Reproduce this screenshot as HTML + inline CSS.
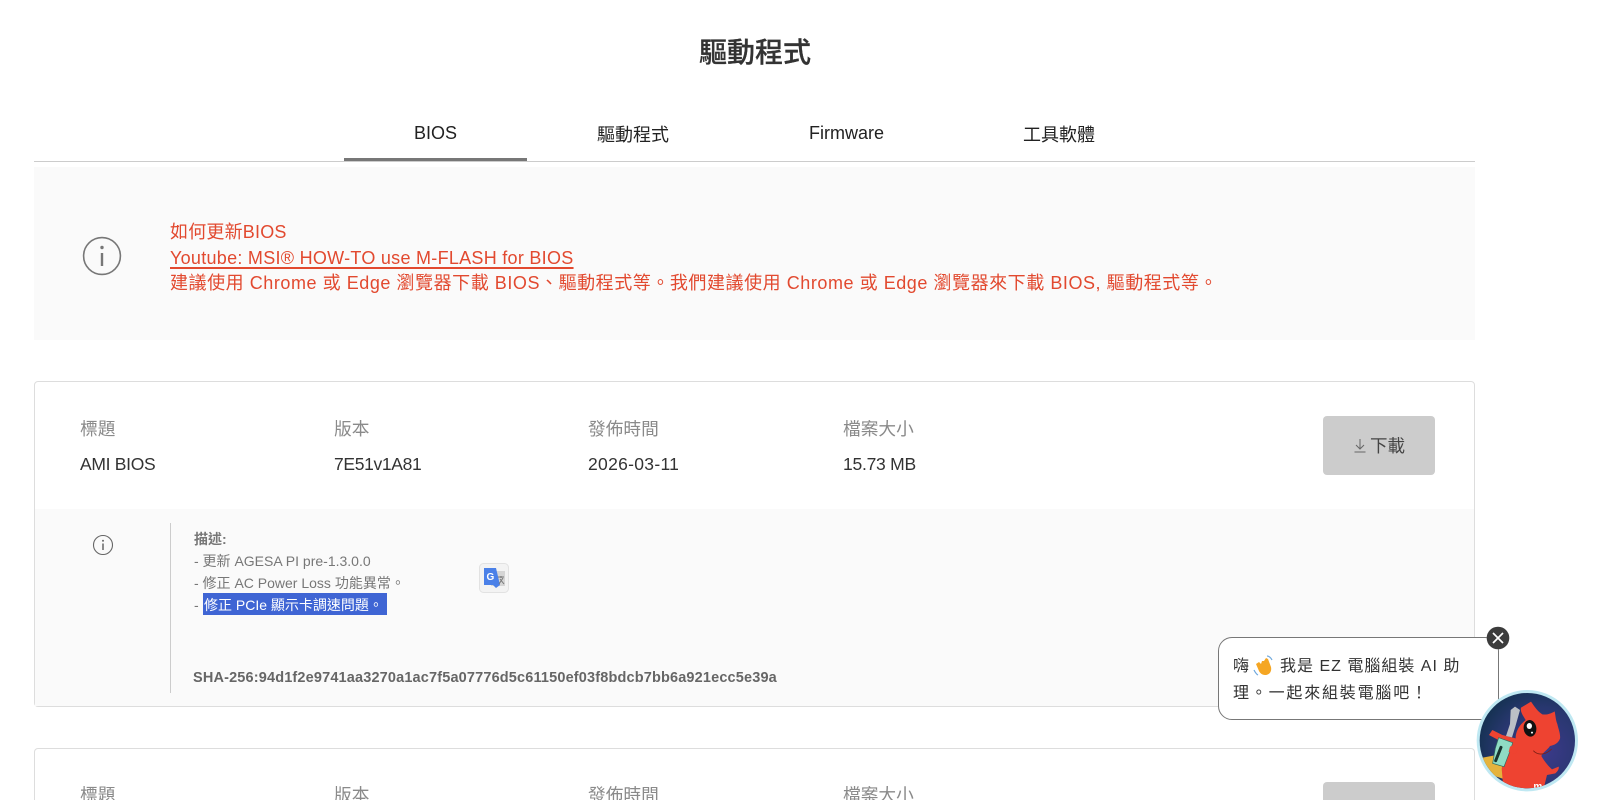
<!DOCTYPE html>
<html lang="zh-Hant">
<head>
<meta charset="utf-8">
<title>驅動程式</title>
<style>
html,body{margin:0;padding:0;background:#fff;width:1600px;height:800px;overflow:hidden;}
#p{width:1600px;height:800px;overflow:hidden;position:relative;font-family:"Liberation Sans","Noto Sans CJK TC",sans-serif;color:#333;}
.a{position:absolute;white-space:nowrap;}
.t{line-height:24px;height:24px;}
.lab{font-size:17.700px;color:#8a8a8a;}
.cut{height:17px;overflow:hidden;}
.val{font-size:17.500px;color:#333;}
.red{font-size:18px;color:#e2492f;line-height:26px;}
.desc{font-size:14px;color:#777;line-height:22px;}
.box{position:absolute;box-sizing:border-box;}
</style>
</head>
<body>
<div id="p">
<div class="a" style="left:699px;top:33px;font-size:28px;line-height:40px;font-weight:500;color:#333;-webkit-text-stroke:.3px #333;">驅動程式</div>

<div class="a t" style="left:414px;top:121px;font-size:18px;color:#222;">BIOS</div>
<div class="a t" style="left:597px;top:123px;font-size:18px;color:#222;">驅動程式</div>
<div class="a t" style="left:809px;top:121px;font-size:18px;color:#222;">Firmware</div>
<div class="a t" style="left:1023px;top:123px;font-size:18px;color:#222;">工具軟體</div>
<div class="box" style="left:34px;top:161px;width:1441px;height:1px;background:#ccc;"></div>
<div class="box" style="left:344px;top:158px;width:183px;height:3px;background:#777;"></div>

<div class="box" style="left:34px;top:167px;width:1441px;height:173px;background:#fafafa;"></div>
<svg class="a" style="left:81px;top:235px;" width="42" height="42" viewBox="0 0 42 42" fill="none"><circle cx="21" cy="21" r="18.400" stroke="#777" stroke-width="1.600"/><circle cx="21" cy="12.500" r="1.700" fill="#777"/><path d="M21 18v13" stroke="#777" stroke-width="2.400"/></svg>
<div class="a red" style="left:170px;top:219px;letter-spacing:.2px;">如何更新BIOS</div>
<div class="a red" style="left:170px;top:245px;letter-spacing:.28px;text-decoration:underline;text-decoration-thickness:1.500px;text-underline-offset:3px;">Youtube: MSI® HOW-TO use M-FLASH for BIOS</div>
<div class="a red" style="left:170px;top:270px;letter-spacing:.55px;">建議使用 Chrome 或 Edge 瀏覽器下載 BIOS、驅動程式等。我們建議使用 Chrome 或 Edge 瀏覽器來下載 BIOS, 驅動程式等。</div>

<div class="box" style="left:34px;top:381px;width:1441px;height:326px;border:1px solid #ddd;border-radius:4px;background:#fff;"></div>
<div class="box" style="left:35px;top:509px;width:1439px;height:197px;background:#fafafa;"></div>
<div class="a t lab" style="left:80px;top:417px;">標題</div>
<div class="a t lab" style="left:334px;top:417px;">版本</div>
<div class="a t lab" style="left:588px;top:417px;">發佈時間</div>
<div class="a t lab" style="left:843px;top:417px;">檔案大小</div>
<div class="a t val" style="left:80px;top:452px;letter-spacing:-.3px;">AMI BIOS</div>
<div class="a t val" style="left:334px;top:452px;letter-spacing:-.35px;">7E51v1A81</div>
<div class="a t val" style="left:588px;top:452px;letter-spacing:.3px;">2026-03-11</div>
<div class="a t val" style="left:843px;top:452px;letter-spacing:-.25px;">15.73 MB</div>

<div class="box" style="left:1323px;top:416px;width:112px;height:59px;background:#ccc;border-radius:4px;"></div>
<svg class="a" style="left:1353px;top:438px;" width="14" height="16" viewBox="0 0 14 16" fill="none" stroke="#666" stroke-width="1"><path d="M7 1v10M3 7l4 4 4-4M1.500 14h11"/></svg>
<div class="a t" style="left:1370px;top:434px;font-size:17.500px;color:#444;">下載</div>

<svg class="a" style="left:92px;top:534px;" width="22" height="22" viewBox="0 0 22 22" fill="none"><circle cx="11" cy="11" r="9.500" stroke="#666" stroke-width="1.100"/><circle cx="11" cy="6.800" r="1" fill="#666"/><path d="M11 9.500v6.500" stroke="#666" stroke-width="1.500"/></svg>
<div class="box" style="left:170px;top:523px;width:1px;height:170px;background:#ccc;"></div>

<div class="a desc" style="left:194px;top:528px;font-weight:700;">描述:</div>
<div class="a desc" style="left:194px;top:550px;">- 更新 AGESA PI pre-1.3.0.0</div>
<div class="a desc" style="left:194px;top:572px;">- 修正 AC Power Loss 功能異常。</div>
<div class="box" style="left:203px;top:593px;width:184px;height:22px;background:#3f65d4;"></div>
<div class="a desc" style="left:194px;top:594px;">-</div>
<div class="a desc" style="left:204px;top:594px;color:#fff;">修正 PCIe 顯示卡調速問題。</div>
<div class="a desc" style="left:193px;top:667px;font-size:14.500px;font-weight:700;color:#666;letter-spacing:.16px;">SHA-256:94d1f2e9741aa3270a1ac7f5a07776d5c61150ef03f8bdcb7bb6a921ecc5e39a</div>

<svg class="a" style="left:479px;top:563px;" width="30" height="30" viewBox="0 0 30 30"><rect x=".5" y=".5" width="29" height="29" rx="4" fill="#f3f3f3" stroke="#e2e2e2"/><rect x="12" y="8" width="14" height="15" fill="#d5d5d5"/><path d="M5 5h12l4 17-4 3-3-3H5z" fill="#4a80e8"/><text x="7.500" y="17" font-family="Liberation Sans, sans-serif" font-size="10" font-weight="700" fill="#fff">G</text><path d="M19 14h6M22 13v2M20 21l4-6M21 16l4 5" stroke="#777" stroke-width="1" fill="none"/></svg>

<div class="box" style="left:34px;top:748px;width:1441px;height:52px;border:1px solid #ddd;border-bottom:0;border-radius:4px 4px 0 0;background:#fff;"></div>
<div class="a t lab cut" style="left:80px;top:783px;">標題</div>
<div class="a t lab cut" style="left:334px;top:783px;">版本</div>
<div class="a t lab cut" style="left:588px;top:783px;">發佈時間</div>
<div class="a t lab cut" style="left:843px;top:783px;">檔案大小</div>
<div class="box" style="left:1323px;top:782px;width:112px;height:18px;background:#ccc;border-radius:4px 4px 0 0;"></div>

<div class="box" style="left:1218px;top:637px;width:281px;height:83px;background:#fff;border:1px solid #777;border-radius:14px;"></div>
<div class="a" style="left:1233px;top:653px;font-size:16px;line-height:27px;color:#333;">嗨</div>
<svg class="a" style="left:1253px;top:655px;" width="21" height="22" viewBox="0 0 21 22"><path d="M3 9l3-2 2 2 1-3 2 0 2-3 2 1 3 8c1 5-2 8-6 8-3 0-5-2-6-4z" fill="#f5a623"/><path d="M14 1c2 0 4 2 5 4M1 15c1 2 2 4 4 5" stroke="#6fa8dc" stroke-width="1.200" fill="none"/></svg>
<div class="a" style="left:1280px;top:653px;font-size:16px;line-height:27px;color:#333;letter-spacing:1px;">我是 EZ 電腦組裝 AI 助</div>
<div class="a" style="left:1233px;top:680px;font-size:16px;line-height:27px;color:#333;letter-spacing:1.800px;">理。一起來組裝電腦吧！</div>

<svg class="a" style="left:1486px;top:626px;" width="24" height="24" viewBox="0 0 24 24"><circle cx="12" cy="12" r="11.300" fill="#3c3c3c"/><path d="M7 7l10 10M17 7L7 17" stroke="#fff" stroke-width="1.700"/></svg>

<svg class="a" style="left:1470px;top:690px;" width="120" height="110" viewBox="0 0 360 330">
<defs>
<radialGradient id="g" cx=".65" cy=".6" r=".75"><stop offset="0" stop-color="#3d3a8c"/><stop offset=".6" stop-color="#28376f"/><stop offset="1" stop-color="#10304a"/></radialGradient>
<clipPath id="c"><circle cx="172" cy="152" r="143"/></clipPath>
</defs>
<circle cx="172" cy="152" r="152" fill="#bfe8f2"/>
<circle cx="172" cy="152" r="143" fill="url(#g)"/>
<g clip-path="url(#c)">
<path d="M28 205l62-12 20 77-60-20z" fill="#e5b33d"/>
<path d="M183 35c10 14 20 30 34 38 14 2 25-2 37-9 3 14 3 26 8 38 3 15 10 30 8 44-5 14-18 20-30 22-8 12-22 20-26 30 8 14 20 30 32 40l20-8c2 6-3 14-10 20l-25 5-10 40H100l-5-60 22-60-32-25-28-15 10-15 30 15 40 10c0-14 5-35 30-55-8-13-17-25-14-37z" fill="#ee4331"/>
<path d="M190 182c15 16 38 12 55-5" stroke="#7e1f15" stroke-width="2.500" fill="none"/>
<ellipse cx="180" cy="115" rx="19" ry="25" fill="#111" transform="rotate(-8 180 115)"/>
<ellipse cx="178" cy="108" rx="8" ry="9" fill="#fff"/>
<circle cx="186" cy="128" r="3" fill="#fff"/>
<path d="M122 60l13-10 15 10-14 50-10 32-18-4 12-36z" fill="#bcc0c6"/>
<path d="M86 143l42 15-6 20-20 52-34-10 8-45z" fill="#8fdcc4" stroke="#2f6b5f" stroke-width="2"/>
<path d="M93 172l-16 40" stroke="#17352f" stroke-width="9" stroke-linecap="round"/>
<path d="M120 170c10-6 22-2 24 6l-8 16-20-6z" fill="#ee4331"/>
<text x="190" y="298" font-family="Liberation Sans, sans-serif" font-size="30" font-weight="700" fill="#fff">m</text>
</g>
</svg>
</div>
</body>
</html>
